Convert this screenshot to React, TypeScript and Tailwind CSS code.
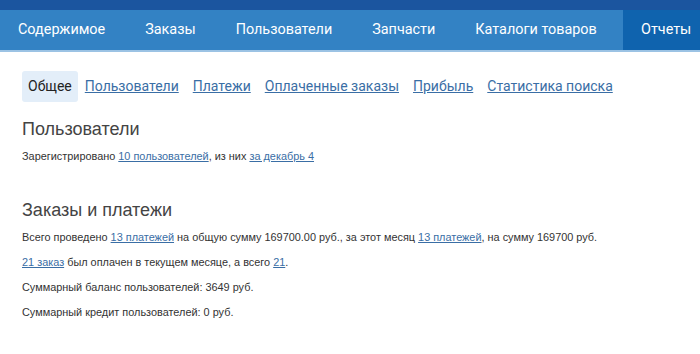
import React from "react";

const navItems = ["Содержимое", "Заказы", "Пользователи", "Запчасти", "Каталоги товаров"];
const tabs = ["Пользователи", "Платежи", "Оплаченные заказы", "Прибыль", "Статистика поиска"];

function L({ children }: { children: React.ReactNode }) {
  return <a href="#" className="text-[#3a6ea5] underline">{children}</a>;
}

export default function App() {
  return (
    <div className="w-[700px] h-[354px] bg-white overflow-hidden">
      <div className="h-[10px] bg-[#1b559f]" />
      <div className="flex h-[42px] bg-[#3382c4] border-b-2 border-[#9cc3e4] font-['Roboto',sans-serif] text-[14.4px] text-white whitespace-nowrap">
        {navItems.map((n) => (
          <div key={n} className="flex items-center px-[20px] first:pl-[18px]">{n}</div>
        ))}
        <div className="flex-1" />
        <div className="flex items-center bg-[#0f63ae] pl-[18px] w-[77px]">Отчеты</div>
      </div>
      <div className="px-[22px]">
        <div className="flex items-center gap-[7px] mt-[19px] font-['Roboto',sans-serif] text-[14px] whitespace-nowrap">
          <div className="bg-[#e3eef9] rounded-[3px] px-[6px] h-[31px] flex items-center text-[#222]">Общее</div>
          <div className="flex gap-[14px]">
            {tabs.map((t) => (
              <L key={t}>{t}</L>
            ))}
          </div>
        </div>
        <div className="font-['Liberation_Sans',Arial,sans-serif] text-[#333]">
          <h2 className="text-[18px] text-[#444] mt-[16px] leading-[22px]">Пользователи</h2>
          <p className="text-[10.9px] mt-[9px] leading-[14px]">
            Зарегистрировано <L>10 пользователей</L>, из них <L>за декабрь 4</L>
          </p>
          <h2 className="text-[18px] text-[#444] mt-[36px] leading-[22px]">Заказы и платежи</h2>
          <p className="text-[10.9px] mt-[9px] leading-[14px]">
            Всего проведено <L>13 платежей</L> на общую сумму 169700.00 руб., за этот месяц <L>13 платежей</L>, на сумму 169700 руб.
          </p>
          <p className="text-[10.9px] mt-[11px] leading-[14px]">
            <L>21 заказ</L> был оплачен в текущем месяце, а всего <L>21</L>.
          </p>
          <p className="text-[10.9px] mt-[11px] leading-[14px]">Суммарный баланс пользователей: 3649 руб.</p>
          <p className="text-[10.9px] mt-[11px] leading-[14px]">Суммарный кредит пользователей: 0 руб.</p>
        </div>
      </div>
    </div>
  );
}
